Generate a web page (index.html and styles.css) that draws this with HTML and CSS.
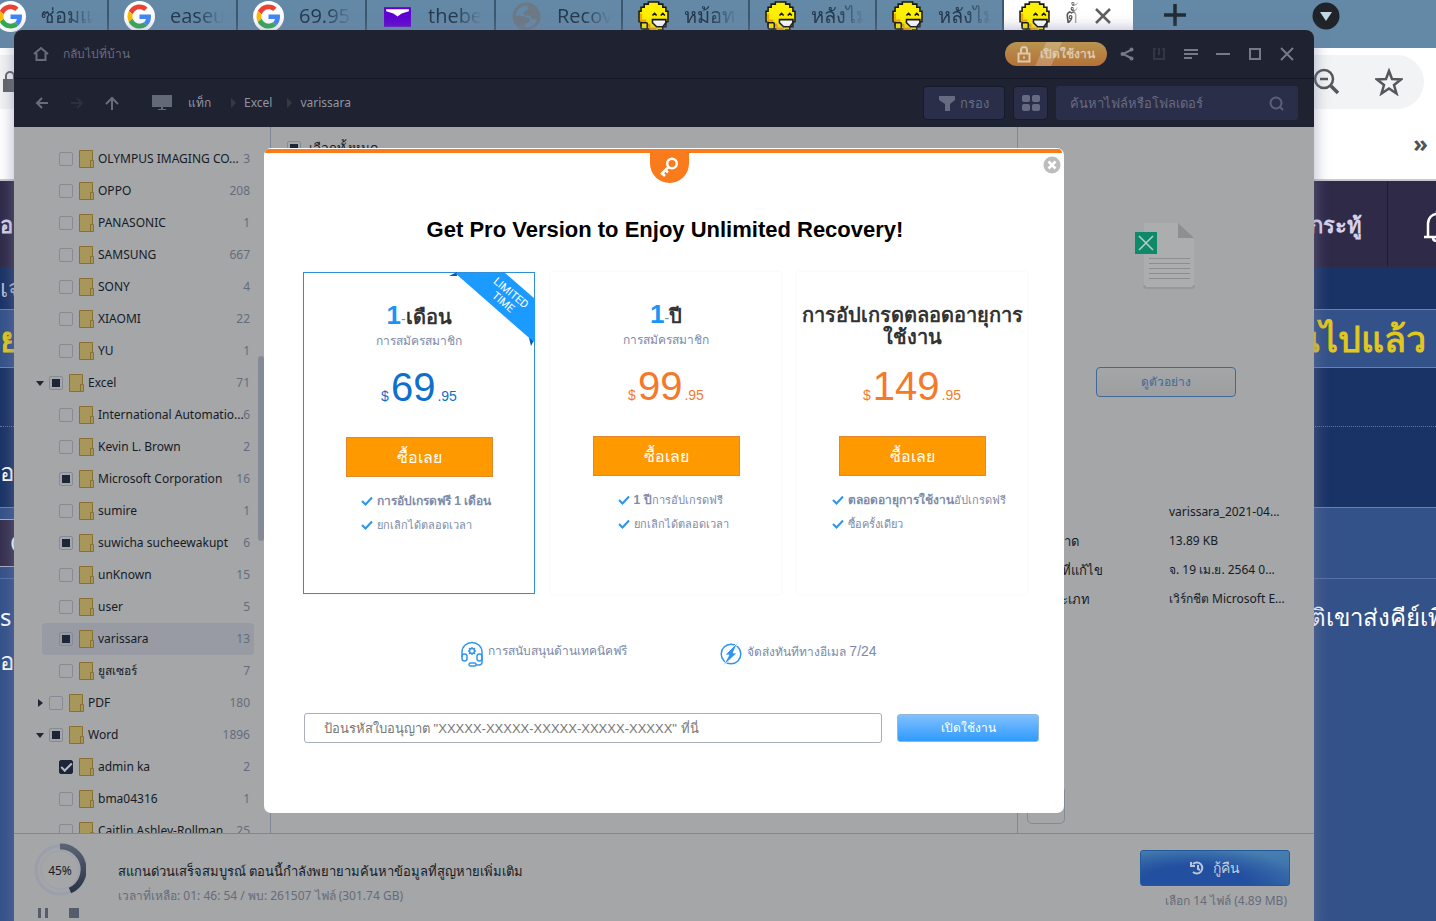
FILE: index.html
```
<!DOCTYPE html>
<html lang="th">
<head>
<meta charset="utf-8">
<title>Data Recovery</title>
<link rel="stylesheet" href="styles.css">
</head>
<body>
<svg class="defs" aria-hidden="true">
  <symbol id="google" viewBox="0 0 62 62"><circle cx="31" cy="31" r="31" fill="#fff"/><g transform="translate(7 7)"><path fill="#EA4335" d="M24 9.5c3.54 0 6.71 1.22 9.21 3.6l6.85-6.85C35.9 2.38 30.47 0 24 0 14.62 0 6.51 5.38 2.56 13.22l7.98 6.19C12.43 13.72 17.74 9.5 24 9.5z"/><path fill="#4285F4" d="M46.98 24.55c0-1.57-.15-3.09-.38-4.55H24v9.02h12.94c-.58 2.96-2.26 5.48-4.78 7.18l7.73 6c4.51-4.18 7.09-10.36 7.09-17.65z"/><path fill="#FBBC05" d="M10.53 28.59c-.48-1.45-.76-2.99-.76-4.59s.27-3.14.76-4.59l-7.98-6.19C.92 16.46 0 20.12 0 24c0 3.88.92 7.54 2.56 10.78l7.97-6.19z"/><path fill="#34A853" d="M24 48c6.48 0 11.93-2.13 15.89-5.81l-7.73-6c-2.15 1.45-4.92 2.3-8.16 2.3-6.26 0-11.57-4.22-13.47-9.91l-7.98 6.19C6.51 42.62 14.62 48 24 48z"/></g></symbol>
  <symbol id="mail" viewBox="0 0 30 30"><path fill="#5f01d1" d="M2 6h26v19H2z"/><path fill="#fff" d="M4 8h22v2l-7 2-4 3-4-3-7-2z"/></symbol>
  <symbol id="globe" viewBox="0 0 30 30"><circle cx="15" cy="15" r="12" fill="none" stroke="#6d7985" stroke-width="3"/><path fill="#6d7985" d="M3 17c0-2 2-3 4-3l6 1 5 2v3l-4 2-2 5C7 26 4 22 3 17zM16 4c5 1 9 4 10 9v4l-5 1-3-4h-5l-1-3 4-2z"/></symbol>
  <symbol id="smile" viewBox="0 0 30 30"><path fill="#fdf000" stroke="#1c1b0a" stroke-width="1.500" d="M10 1h10v2h4v3h3v4h2v10h-2v5h-3v3h-4v1h-9v-2H7v-3H3v-4H1V10h2V6h3V3h4z"/><path fill="#f7a600" d="M2 12h2v6h4v4h4v4h6v2h-7v-3H6v-5H2z"/><path fill="none" stroke="#111" stroke-width="1.500" d="M14 14l2-2 2 2M22 14l2-2 2 2"/><path fill="#fff" stroke="#111" stroke-width="1.500" d="M14 18h13v3l-3 4h-6l-4-4z"/><rect x="3" y="21" width="6" height="6" rx="1" fill="#fdf000" stroke="#111" stroke-width="1.500"/></symbol>
  <symbol id="folder" viewBox="0 0 15 18"><path d="M.5 .5h13v17H.5z" fill="#a8975a" stroke="#8a7030"/><path d="M11.500 10.500h3v7h-3z" fill="#a8975a" stroke="#8a7030"/></symbol>
  <symbol id="tick" viewBox="0 0 12 10"><path d="M1 5l3.500 3.500L11 1.500" fill="none" stroke="#2f93e8" stroke-width="2"/></symbol>
</svg>

<div class="desktop">
  <div class="browser">
    <div class="tabs">
      <div class="tab"><svg class="fav"><use href="#google"/></svg><span>ซ่อมแซม</span></div>
      <div class="tab"><svg class="fav"><use href="#google"/></svg><span>easeus</span></div>
      <div class="tab"><svg class="fav"><use href="#google"/></svg><span>69.95</span></div>
      <div class="tab"><svg class="fav"><use href="#mail"/></svg><span>thebest</span></div>
      <div class="tab narrow"><svg class="fav"><use href="#globe"/></svg><span>Recov</span></div>
      <div class="tab narrow"><svg class="fav"><use href="#smile"/></svg><span>หม้อทอด</span></div>
      <div class="tab narrow"><svg class="fav"><use href="#smile"/></svg><span>หลังไมค์</span></div>
      <div class="tab narrow"><svg class="fav"><use href="#smile"/></svg><span>หลังไมค์</span></div>
      <div class="tab active"><svg class="fav"><use href="#smile"/></svg><span>ตั้ง</span><button class="plain" aria-label="ปิดแท็บ"><svg width="18" height="18" viewBox="0 0 18 18"><path d="M2 2l14 14M16 2L2 16" stroke="#5b5f63" stroke-width="2.500"/></svg></button></div>
      <button class="plain newtab" aria-label="แท็บใหม่"><svg width="24" height="24" viewBox="0 0 24 24"><path d="M12 1v22M1 12h22" stroke="#222b33" stroke-width="3.500"/></svg></button>
      <button class="plain tabmenu" aria-label="รายการแท็บ"><svg width="28" height="28" viewBox="0 0 28 28"><circle cx="14" cy="14" r="13.500" fill="#202428"/><path d="M8 10h12l-6 9z" fill="#c3d6e4"/></svg></button>
    </div>
    <div class="toolbar">
      <div class="address">
        <svg width="16" height="22" viewBox="0 0 16 22"><path d="M4 9V5a4 4 0 0 1 8 0v4" fill="none" stroke="#5f6368" stroke-width="2"/><path d="M1 8h15v13H1z" fill="#5f6368"/></svg>
        <span class="address-tools">
          <svg width="28" height="28" viewBox="0 0 28 28" fill="none" stroke="#54575a" stroke-width="2.500"><circle cx="11" cy="11" r="9"/><path d="M7 11h8"/><path d="M18 18l7 7" stroke-width="3.500"/></svg>
          <svg width="28" height="28" viewBox="0 0 28 28" fill="none" stroke="#54575a" stroke-width="2.500"><path d="M14 3l3 8 9 .5-7 5.500 2.500 8.500-7.500-5-7.500 5L9 17l-7-5.500L11 11z"/></svg>
        </span>
      </div>
      <div class="bookmarks">»</div>
    </div>
    <div class="band nav"><span class="left">อง</span><span class="right">กระทู้</span><svg class="bell" width="28" height="40" viewBox="0 0 28 40"><path d="M2 33h28M6 33V20c0-6 4-10 9-10s9 4 9 10v13M11 34c0 4 8 4 8 0M15 10V7" fill="none" stroke="#fff" stroke-width="2.500"/></svg></div>
    <div class="band sub"><span class="left">เจ</span></div>
    <div class="band headline"><span class="left">ย</span><span class="right">นไปแล้ว</span></div>
    <div class="band meta"></div>
    <div class="band author"><span class="left">อง</span></div>
    <div class="band action"><span class="left chip">C</span></div>
    <div class="band post"><span class="left">s c</span><span class="right">ติเขาส่งคีย์เพื่อ</span></div>
    <div class="band post"><span class="left">อเ</span></div>
  </div>

  <div class="window">
    <header class="titlebar">
      <button class="plain home"><svg width="16" height="16" viewBox="0 0 16 16"><path d="M1 8l7-6 7 6M3.500 7v7h9V7" fill="none" stroke="#686d7e" stroke-width="2"/></svg>กลับไปที่บ้าน</button>
      <div class="controls">
        <button class="activate"><svg width="14" height="17" viewBox="0 0 14 17" fill="none" stroke="#ddc9ae" stroke-width="2"><path d="M1.500 7.500h11v8h-11zM4 7V4a3 3 0 0 1 6 0v3M6 11.500h2"/></svg>เปิดใช้งาน</button>
        <button class="plain" aria-label="แชร์"><svg width="14" height="14" viewBox="0 0 14 14"><path d="M11 3L3 7l8 4" fill="none" stroke="#757989" stroke-width="2"/><g fill="#757989"><circle cx="11.500" cy="2.500" r="2"/><circle cx="2.500" cy="7" r="2"/><circle cx="11.500" cy="11.500" r="2"/></g></svg></button>
        <button class="plain" aria-label="นำเข้า"><svg width="14" height="14" viewBox="0 0 14 14" fill="none" stroke="#323645" stroke-width="2"><path d="M4 2H2v10h10V2h-2M7 1v7"/></svg></button>
        <button class="plain" aria-label="เมนู"><svg width="14" height="12" viewBox="0 0 14 12" stroke="#757989" stroke-width="2"><path d="M0 2h14M0 6h14M0 10h8"/></svg></button>
        <button class="plain" aria-label="ย่อ"><svg width="14" height="14" viewBox="0 0 14 14" stroke="#757989" stroke-width="2"><path d="M0 7h14"/></svg></button>
        <button class="plain" aria-label="ขยาย"><svg width="14" height="14" viewBox="0 0 14 14" fill="none" stroke="#757989" stroke-width="2"><path d="M2 2h10v10H2z"/></svg></button>
        <button class="plain" aria-label="ปิด"><svg width="14" height="14" viewBox="0 0 14 14" stroke="#757989" stroke-width="2"><path d="M1 1l12 12M13 1L1 13"/></svg></button>
      </div>
    </header>
    <nav class="navbar">
      <div class="arrows">
        <button class="plain" aria-label="ย้อนกลับ"><svg width="14" height="14" viewBox="0 0 14 14" fill="none" stroke="#686d7e" stroke-width="2"><path d="M13 7H2M7 2L2 7l5 5"/></svg></button>
        <button class="plain" aria-label="ไปข้างหน้า"><svg width="14" height="14" viewBox="0 0 14 14" fill="none" stroke="#2c3040" stroke-width="2"><path d="M1 7h11M7 2l5 5-5 5"/></svg></button>
        <button class="plain" aria-label="ขึ้น"><svg width="14" height="14" viewBox="0 0 14 14" fill="none" stroke="#686d7e" stroke-width="2"><path d="M7 14V2M1 8l6-6 6 6"/></svg></button>
      </div>
      <div class="crumbs">
        <svg width="20" height="16" viewBox="0 0 20 16" fill="#646979"><path d="M0 0h20v12H0zM9 12h2v2h3v1H6v-1h3z"/></svg>
        <span>แท็ก</span><i></i><span>Excel</span><i></i><span>varissara</span>
      </div>
      <div class="tools">
        <button class="tool filter"><svg width="16" height="15" viewBox="0 0 16 15" fill="#676b82"><path d="M0 0h16v4l-5 4v7H6V8L0 4z"/></svg>กรอง</button>
        <button class="tool grid" aria-label="มุมมอง"><svg width="18" height="16" viewBox="0 0 18 16" fill="#676b82"><rect width="8" height="7" rx="2"/><rect x="10" width="8" height="7" rx="2"/><rect y="9" width="8" height="7" rx="2"/><rect x="10" y="9" width="8" height="7" rx="2"/></svg></button>
        <label class="search"><input type="text" aria-label="ค้นหา" placeholder="ค้นหาไฟล์หรือโฟลเดอร์"><svg width="15" height="15" viewBox="0 0 15 15" fill="none" stroke="#5d6178" stroke-width="2"><circle cx="7" cy="7" r="5.500"/><path d="M11 11l3 3"/></svg></label>
      </div>
    </nav>
    <div class="body">
      <aside class="sidebar">
        <ul class="tree">
          <li><label><input type="checkbox"><svg class="folder"><use href="#folder"/></svg><span>OLYMPUS IMAGING CO...</span></label><b>3</b></li>
          <li><label><input type="checkbox"><svg class="folder"><use href="#folder"/></svg><span>OPPO</span></label><b>208</b></li>
          <li><label><input type="checkbox"><svg class="folder"><use href="#folder"/></svg><span>PANASONIC</span></label><b>1</b></li>
          <li><label><input type="checkbox"><svg class="folder"><use href="#folder"/></svg><span>SAMSUNG</span></label><b>667</b></li>
          <li><label><input type="checkbox"><svg class="folder"><use href="#folder"/></svg><span>SONY</span></label><b>4</b></li>
          <li><label><input type="checkbox"><svg class="folder"><use href="#folder"/></svg><span>XIAOMI</span></label><b>22</b></li>
          <li><label><input type="checkbox"><svg class="folder"><use href="#folder"/></svg><span>YU</span></label><b>1</b></li>
          <li class="top open"><label><input type="checkbox" class="partial"><svg class="folder"><use href="#folder"/></svg><span>Excel</span></label><b>71</b></li>
          <li><label><input type="checkbox"><svg class="folder"><use href="#folder"/></svg><span>International Automatio...</span></label><b>6</b></li>
          <li><label><input type="checkbox"><svg class="folder"><use href="#folder"/></svg><span>Kevin L. Brown</span></label><b>2</b></li>
          <li><label><input type="checkbox" class="partial"><svg class="folder"><use href="#folder"/></svg><span>Microsoft Corporation</span></label><b>16</b></li>
          <li><label><input type="checkbox"><svg class="folder"><use href="#folder"/></svg><span>sumire</span></label><b>1</b></li>
          <li><label><input type="checkbox" class="partial"><svg class="folder"><use href="#folder"/></svg><span>suwicha sucheewakupt</span></label><b>6</b></li>
          <li><label><input type="checkbox"><svg class="folder"><use href="#folder"/></svg><span>unKnown</span></label><b>15</b></li>
          <li><label><input type="checkbox"><svg class="folder"><use href="#folder"/></svg><span>user</span></label><b>5</b></li>
          <li class="selected"><label><input type="checkbox" class="partial"><svg class="folder"><use href="#folder"/></svg><span>varissara</span></label><b>13</b></li>
          <li><label><input type="checkbox"><svg class="folder"><use href="#folder"/></svg><span>ยูสเซอร์</span></label><b>7</b></li>
          <li class="top closed"><label><input type="checkbox"><svg class="folder"><use href="#folder"/></svg><span>PDF</span></label><b>180</b></li>
          <li class="top open"><label><input type="checkbox" class="partial"><svg class="folder"><use href="#folder"/></svg><span>Word</span></label><b>1896</b></li>
          <li><label><input type="checkbox" checked><svg class="folder"><use href="#folder"/></svg><span>admin ka</span></label><b>2</b></li>
          <li><label><input type="checkbox"><svg class="folder"><use href="#folder"/></svg><span>bma04316</span></label><b>1</b></li>
          <li><label><input type="checkbox"><svg class="folder"><use href="#folder"/></svg><span>Caitlin Ashley-Rollman</span></label><b>25</b></li>
        </ul>
        <div class="thumb"></div>
      </aside>
      <main class="files"><label><input type="checkbox" class="partial">เลือกทั้งหมด</label></main>
      <aside class="details">
        <svg class="doc" width="64" height="70" viewBox="0 0 64 70"><path d="M10 2h34l16 16v46a3 3 0 0 1-3 3H13a3 3 0 0 1-3-3z" fill="#acadae"/><path d="M10 64a3 3 0 0 0 3 3h44a3 3 0 0 0 3-3" fill="none" stroke="#969899" stroke-width="2"/><path d="M44 2l16 15H44z" fill="#8e8f91"/><path d="M15 37.500h41M15 42.500h41M15 47.500h41M15 52.500h41M15 57.500h41" stroke="#8c8d8f"/><path d="M1 11h22v22H1z" fill="#0e8a6a"/><path d="M5 15l14 14M19 15L5 29" stroke="#b8cfc8" stroke-width="1.500"/></svg>
        <button class="preview">ดูตัวอย่าง</button>
        <dl><dt>ชื่อ</dt><dd>varissara_2021-04...</dd><dt>ขนาด</dt><dd>13.89 KB</dd><dt>วันที่แก้ไข</dt><dd>จ. 19 เม.ย. 2564 0...</dd><dt>ประเภท</dt><dd>เวิร์กชีต Microsoft E...</dd></dl>
        <button class="panel-toggle" aria-label="แผงข้อมูล"></button>
      </aside>
    </div>
    <footer class="status">
      <div class="progress">
        <svg width="52" height="54" viewBox="0 0 52 54"><defs><linearGradient id="ring" x2="0" y2="1"><stop offset="0" stop-color="#596173"/><stop offset="1" stop-color="#2c3449"/></linearGradient></defs><circle cx="26" cy="28" r="24" fill="none" stroke="#9b9fab" stroke-width="3"/><circle cx="26" cy="28" r="19" fill="none" stroke="#9c9fab"/><path d="M26 4.500a23 23 0 0 1 10 44" fill="none" stroke="url(#ring)" stroke-width="6"/><text x="26" y="33" text-anchor="middle" class="pct">45%</text></svg>
        <div class="playback"><button class="plain" aria-label="หยุดชั่วคราว"><svg width="10" height="10"><path d="M0 0h3v10H0zM7 0h3v10H7z" fill="#555c6b"/></svg></button><button class="plain" aria-label="หยุด"><svg width="10" height="10"><path d="M0 0h10v10H0z" fill="#555c6b"/></svg></button></div>
      </div>
      <div class="scan"><p>สแกนด่วนเสร็จสมบูรณ์ ตอนนี้กำลังพยายามค้นหาข้อมูลที่สูญหายเพิ่มเติม</p><p class="muted">เวลาที่เหลือ: 01: 46: 54 / พบ: 261507 ไฟล์ (301.74 GB)</p></div>
      <div class="recover"><button><svg width="15" height="14" viewBox="0 0 15 14" fill="none" stroke="#b9c6d9" stroke-width="2"><path d="M3 3a5.500 5.500 0 1 1 0 8M1 1v4h4M8 4v4l2 1"/></svg>กู้คืน</button><p class="muted">เลือก 14 ไฟล์ (4.89 MB)</p></div>
    </footer>

    <div class="overlay">
      <section class="modal" role="dialog" aria-labelledby="offer">
        <div class="key"><svg width="20" height="20" viewBox="0 0 20 20" fill="none" stroke="#fff" stroke-width="2.500"><circle cx="13" cy="6.500" r="4.800"/><path d="M9.500 10L2 17.500M3 16l3 3M6 12.500l3 3"/></svg></div>
        <button class="plain close" aria-label="ปิดหน้าต่าง"><svg width="18" height="18" viewBox="0 0 18 18"><circle cx="9" cy="9" r="8.500" fill="#bdbdbd"/><path d="M5.500 5.500l7 7M12.500 5.500l-7 7" stroke="#fff" stroke-width="2.500"/></svg></button>
        <h1 id="offer">Get Pro Version to Enjoy Unlimited Recovery!</h1>
        <div class="plans">
          <article class="plan best">
            <div class="ribbon"><svg width="86" height="74" viewBox="0 0 86 74"><path d="M0 4l8-4v4zM80 66h6l-4 8z" fill="#0d55b5"/><path d="M6 1h50l30 26v44z" fill="#1b9aff"/></svg><span>LIMITED<br>TIME</span></div>
            <h2><em>1</em><i>-</i>เดือน</h2><p class="sub-title">การสมัครสมาชิก</p>
            <p class="price">$<strong>69</strong>.95</p>
            <button class="buy">ซื้อเลย</button>
            <ul><li><svg><use href="#tick"/></svg><b>การอัปเกรดฟรี 1 เดือน</b></li><li><svg><use href="#tick"/></svg>ยกเลิกได้ตลอดเวลา</li></ul>
          </article>
          <article class="plan">
            <h2><em>1</em><i>-</i>ปี</h2><p class="sub-title">การสมัครสมาชิก</p>
            <p class="price">$<strong>99</strong>.95</p>
            <button class="buy">ซื้อเลย</button>
            <ul><li><svg><use href="#tick"/></svg><b>1 ปี</b>การอัปเกรดฟรี</li><li><svg><use href="#tick"/></svg>ยกเลิกได้ตลอดเวลา</li></ul>
          </article>
          <article class="plan">
            <h2 class="long">การอัปเกรดตลอดอายุการ<br>ใช้งาน</h2>
            <p class="price">$<strong>149</strong>.95</p>
            <button class="buy">ซื้อเลย</button>
            <ul><li><svg><use href="#tick"/></svg><b>ตลอดอายุการใช้งาน</b>อัปเกรดฟรี</li><li><svg><use href="#tick"/></svg>ซื้อครั้งเดียว</li></ul>
          </article>
        </div>
        <div class="perks">
          <div><svg width="22" height="26" viewBox="0 0 22 26" fill="none" stroke="#3399ee" stroke-width="1.500"><path d="M1 16v-5a10 9.500 0 0 1 20 0v10a3 3 0 0 1-3 3h-3"/><rect x="1" y="13" width="5" height="7" rx="2.500"/><rect x="16" y="13" width="5" height="7" rx="2.500"/><rect x="8" y="22" width="7" height="3" rx="1.500"/><circle cx="11" cy="10" r="2.500"/><path d="M11 6v1M11 13v1M7 10h1M14 10h1M8 7l1 1M13 12l1 1M14 7l-1 1M9 12l-1 1"/></svg><p>การสนับสนุนด้านเทคนิคฟรี</p></div>
          <div><svg width="22" height="26" viewBox="0 0 22 26"><circle cx="11" cy="13" r="9.800" fill="none" stroke="#2f96ef" stroke-width="1.500"/><path d="M18 1L5 14h4L3 25l14-13h-4z" fill="#2f96ef" stroke="#fff" stroke-width=".8"/></svg><p>จัดส่งทันทีทางอีเมล <span>7/24</span></p></div>
        </div>
        <form class="license"><input type="text" aria-label="รหัสใบอนุญาต" placeholder='ป้อนรหัสใบอนุญาต "XXXXX-XXXXX-XXXXX-XXXXX-XXXXX" ที่นี่'><button type="button">เปิดใช้งาน</button></form>
      </section>
    </div>
  </div>
</div>
</body>
</html>
```

FILE: styles.css
```
* { box-sizing: border-box; }
body, h1, h2, p, ul, dl, dd { margin: 0; padding: 0; }
body { font: 12px/20px "Noto Sans", sans-serif; color: #161b26; }
ul { list-style: none; }
button, input { font: inherit; color: inherit; }
button { cursor: pointer; }
svg { flex: none; }
.defs { position: absolute; width: 0; height: 0; }
.plain { border: 0; padding: 0; background: none; display: flex; align-items: center; }

.desktop { position: relative; height: 100vh; overflow: hidden; background: #34528a; }

/* browser behind the window */
.tabs { height: 48px; display: flex; align-items: flex-start; margin-left: -20px; background: #6389a7; color: #24394b; font: 20px/32px "Open Sans", "Noto Sans", sans-serif; }
.tab { flex: none; display: flex; align-items: center; gap: 15px; width: 129px; height: 32px; padding: 0 10px 0 15px; border-right: 2px solid #3b5870; }
.tab.narrow { width: 127px; }
.tab span { flex: none; width: 54px; overflow: hidden; white-space: nowrap; mask-image: linear-gradient(90deg, #000 50%, transparent); }
.fav { width: 31px; height: 31px; }
.tab.active { background: #fff; border: 0; color: #555; }
.tab.active span { width: 14px; }
.newtab { margin-left: 30px; height: 30px; }
.tabmenu { margin-left: 125px; height: 31px; }
.toolbar { height: 133px; background: #fff; padding-top: 7px; border-bottom: 2px solid #c9c9d2; }
.address { display: flex; justify-content: space-between; align-items: center; height: 54px; margin-right: 12px; padding: 0 21px 0 2px; background: #f1f3f4; border-radius: 0 27px 27px 0; }
.address-tools { display: flex; gap: 34px; }
.bookmarks { text-align: right; padding: 14px 8px; font: bold 24px/40px "Noto Sans", sans-serif; color: #505458; }
.band { display: flex; align-items: center; justify-content: space-between; color: #fff; font: 24px/40px "Noto Sans", sans-serif; white-space: nowrap; }
.left { width: 14px; overflow: hidden; }
.right { width: 126px; overflow: hidden; margin-left: auto; }
.nav { height: 86px; background: #302a49; color: #d6d0ea; font-size: 22px; font-weight: bold; }
.nav .right { width: 78px; border-right: 1px solid #1f1a33; line-height: 84px; }
.bell { margin-left: 34px; margin-right: -14px; }
.sub { height: 42px; background: #1a3366; color: #b0bdd4; }
.headline { height: 59px; border: solid #6482ba; border-width: 1px 0; color: #e2c81c; font-size: 36px; line-height: 56px; -webkit-text-stroke: 1px #e2c81c; }
.headline .right { padding-right: 10px; direction: rtl; }
.meta { height: 59px; background: #1a3366; border-bottom: 1px dotted #5d77a8; }
.author { height: 81px; padding-top: 10px; background: #1a3366; border-bottom: 1px solid #6482ba; }
.action { height: 71px; border-bottom: 1px solid #5672a8; }
.chip { background: #37304f; border: solid #a8aec4; border-width: 1px 0; line-height: 46px; padding-left: 10px; }
.post { height: 44px; margin-top: 16px; }
.post + .post { margin-top: 0; }

/* application window */
.window { position: absolute; inset: 30px 122px -10px 14px; display: flex; flex-direction: column; border-radius: 8px 8px 0 0; overflow: hidden; background: #a4a6a8; box-shadow: 0 0 16px rgba(120, 125, 160, .6); }
.titlebar, .navbar { display: flex; align-items: center; justify-content: space-between; background: #1e2231; color: #686d7e; }
.titlebar { height: 48px; padding: 0 20px 0 19px; }
.home { gap: 14px; }
.controls { display: flex; align-items: center; gap: 18px; }
.activate { display: flex; align-items: center; gap: 9px; height: 24px; margin-right: -5px; padding: 0 12px; border: 0; border-radius: 12px; color: #ddc9ae; font-weight: bold; line-height: 24px; background: linear-gradient(115deg, transparent 36%, rgba(255,255,255,.2) 37% 50%, transparent 51%), linear-gradient(#b89450, #b57138); }
.navbar { height: 49px; border-top: 1px solid #141827; padding: 0 16px 0 21px; gap: 41px; }
.arrows, .crumbs, .tools { display: flex; align-items: center; }
.arrows { gap: 21px; height: 48px; }
.crumbs { flex: 1; gap: 8px; margin-left: -8px; color: #9195a2; }
.crumbs svg { margin-right: 8px; }
.crumbs i { border: 5px solid transparent; border-left-color: #343848; border-right: 0; margin-left: 7px; }
.crumbs i:first-of-type { margin-left: 12px; }
.tools { gap: 8px; }
.tool { display: flex; align-items: center; justify-content: center; gap: 5px; height: 34px; border: 1px solid #171a2c; border-radius: 4px; background: #2a2e49; font-size: 13px; }
.filter { width: 82px; }
.grid { width: 35px; }
.search { display: flex; align-items: center; width: 242px; height: 34px; padding: 0 14px; background: #2a2e49; border-radius: 3px; }
.search input { flex: 1; min-width: 0; padding: 0; border: 0; background: none; font-size: 13px; }
.search input::placeholder { color: #676b82; opacity: 1; }

.body { flex: 1; min-height: 0; display: flex; }
.sidebar { flex: none; display: flex; width: 257px; overflow: hidden; padding-top: 16px; border-right: 1px solid #7c8798; }
.tree { flex: none; width: 244px; padding-left: 28px; padding-right: 4px; }
.tree li { display: flex; align-items: center; height: 32px; padding: 0 4px 0 17px; border-radius: 4px; white-space: nowrap; }
.tree label { flex: 1; min-width: 0; display: flex; align-items: center; }
.tree .top { margin-left: -10px; }
.tree .top::before { content: ""; margin: 0 5px 0 -13px; border: solid transparent; }
.tree .open::before { border-width: 5px 4px 0; border-top-color: #202634; }
.tree .closed::before { margin-left: -11px; margin-right: 6px; border-width: 4px 0 4px 5px; border-left-color: #202634; }
.tree b { font-weight: normal; color: #666d7a; }
.tree .selected { background: #989ba4; }
.folder { width: 15px; height: 18px; margin: 0 4px 0 6px; }
input[type=checkbox] { appearance: none; flex: none; width: 14px; height: 14px; margin: 0; border: 1px solid #858b96; border-radius: 2px; background: transparent; }
input[type=checkbox].partial { background: linear-gradient(#1d2539, #1d2539) center / 8px 8px no-repeat; }
input[type=checkbox]:checked { border-color: #1d2539; background: #1d2539; }
input[type=checkbox]:checked::after { content: ""; display: block; width: 9px; height: 4px; margin: 2px 1px; border: solid #b7bac0; border-width: 0 0 2px 2px; transform: rotate(-45deg); }
.thumb { width: 6px; height: 185px; margin-top: 213px; border-radius: 3px; background: #858b96; }
.files { flex: 1; padding: 11px 16px; font-size: 13px; }
.files label { display: flex; align-items: center; gap: 8px; }
.details { flex: none; display: flex; flex-direction: column; align-items: center; width: 297px; padding-top: 94px; border-left: 1px solid #7c8798; }
.preview { width: 140px; height: 30px; margin-top: 76px; border: 1px solid #40699a; border-radius: 4px; background: linear-gradient(#a4a6a8, #9c9ea0); color: #40699a; }
.details dl { align-self: stretch; display: grid; grid-template-columns: 123px 1fr; row-gap: 9px; margin: 105px 0 0 28px; white-space: nowrap; }
.details dt { font-size: 13px; }
.panel-toggle { align-self: flex-start; width: 38px; height: 38px; margin: auto 0 9px 9px; border: 1px solid #858b96; border-radius: 5px; background: none; }

.status { display: flex; height: 98px; padding: 8px 24px 0 20px; border-top: 1px solid #7c8798; }
.progress { width: 84px; }
.pct { fill: #161b26; }
.playback { display: flex; gap: 21px; padding-left: 4px; margin-top: 6px; }
.scan { flex: 1; padding-top: 19px; font-size: 13px; }
.muted { color: #666c79; margin-top: 5px; font-size: 12px; }
.recover { padding-top: 8px; text-align: right; }
.recover button { display: flex; align-items: center; justify-content: center; gap: 8px; width: 150px; height: 36px; border: 1px solid #235a9c; border-radius: 3px; color: #c3cedd; font-size: 14px; background: radial-gradient(ellipse at 35% 100%, #234fa0 0 40%, transparent 80%), linear-gradient(#467fb0, #3567a8); }
.recover .muted { margin: 5px 3px 0 0; }

/* upgrade dialog */
.overlay { position: absolute; inset: 0; display: flex; align-items: center; justify-content: center; }
.modal { position: relative; width: 800px; padding: 64px 25px 70px 39px; background: #fff; border-radius: 7px; font-family: "Liberation Sans", "Noto Sans", sans-serif; color: #7d8aa8; }
.modal::before { content: ""; position: absolute; inset: 1px 2px auto 1px; height: 4px; border-radius: 4px 4px 0 0; background: #f97b1c; }
.key { position: absolute; top: 3px; left: 386px; width: 39px; height: 32px; display: grid; place-items: center; padding-right: 2px; border-radius: 0 0 20px 20px; background: #f97b1c; }
.close { position: absolute; top: 8px; right: 3px; }
h1 { margin-right: 12px; font-size: 22px; line-height: 36px; color: #000; text-align: center; }
.plans { display: grid; grid-template-columns: 232px 230px 230px; gap: 16px; margin-top: 24px; }
.plan { position: relative; height: 322px; padding-top: 26px; display: flex; flex-direction: column; align-items: center; box-shadow: 0 0 3px #f3f3f3; }
.best { border: 1px solid #2f8fd6; }
.plan h2 { height: 32px; font-size: 20px; line-height: 32px; color: #333; white-space: nowrap; text-align: center; }
.plan h2 em { font-style: normal; font-size: 26px; color: #1b94f7; }
.plan h2 i { font: 14px "Liberation Sans", sans-serif; color: #7d8aa8; }
.plan h2.long { height: 52px; padding-top: 6px; line-height: 22px; }
.sub-title { height: 20px; font-size: 12px; }
.price { margin-top: 12px; height: 48px; font-size: 14px; line-height: 48px; color: #f5792a; }
.price strong { font-size: 40px; font-weight: normal; margin: 0 2px; }
.best .price { color: #0f70cc; }
.buy { width: 147px; height: 40px; margin-top: 26px; border: 1px solid #e0882c; background: #ff9900; color: #fff; font-size: 16px; line-height: 40px; padding: 0; }
.plan ul { margin-top: 12px; padding-left: 14px; font-size: 11px; line-height: 24px; white-space: nowrap; }
.plan li b { font-size: 12px; }
.plan li { display: flex; align-items: center; }
.plan li svg { width: 12px; height: 10px; margin-right: 4px; }
.ribbon { position: absolute; top: -1px; right: -1px; width: 86px; height: 74px; }
.ribbon span { position: absolute; top: 14px; left: 37px; transform: rotate(40deg); font: 11px/12px "Roboto", sans-serif; color: #fff; text-align: center; }
.perks { display: flex; gap: 93px; margin: 45px 0 0 158px; line-height: 24px; }
.perks div { display: flex; align-items: flex-start; gap: 5px; height: 30px; white-space: nowrap; }
.perks span { font-size: 14px; }
.perks svg { margin-top: 2px; }
.license { display: flex; align-items: center; gap: 15px; margin: 44px 0 0 1px; }
.license input { width: 578px; height: 30px; padding: 0 19px; border: 1px solid #a8b0bb; border-radius: 3px; font-size: 13px; }
.license input::placeholder { color: #777; opacity: 1; }
.license button { width: 142px; height: 28px; border: 1px solid #8fb8dc; border-radius: 3px; background: linear-gradient(#80c0ff, #2f9bfb); color: #fff; font-size: 12px; }
```
